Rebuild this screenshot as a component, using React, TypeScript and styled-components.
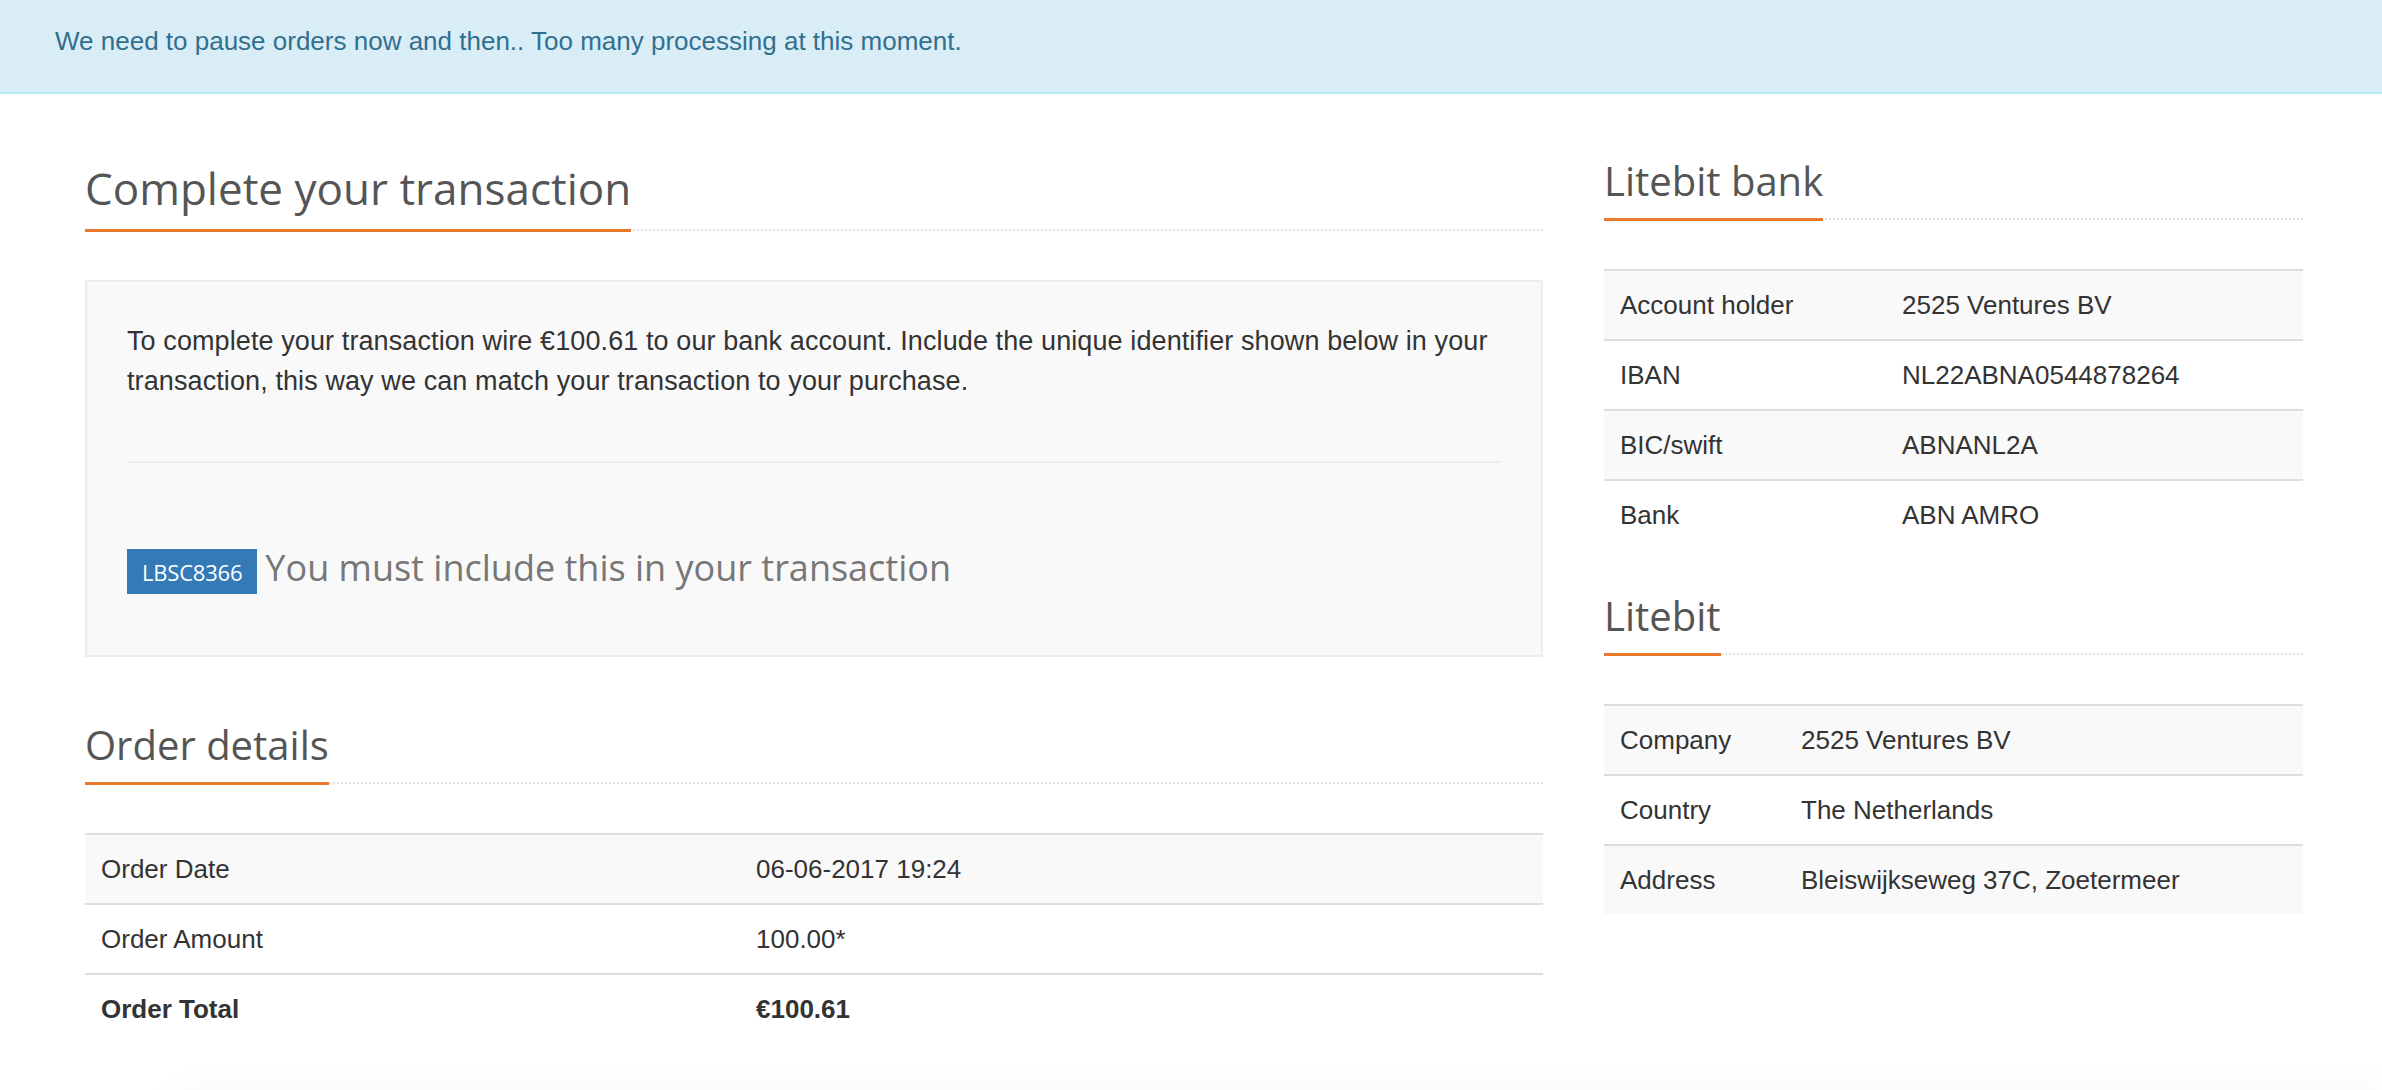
import React from "react";
import styled, { createGlobalStyle } from "styled-components";

const GlobalStyle = createGlobalStyle`
  html, body { margin: 0; padding: 0; background: #fff; }
  body {
    font-family: "Liberation Sans", Arial, Helvetica, sans-serif;
    font-size: 26px;
    line-height: 40px;
    color: #333;
  }
  * { box-sizing: border-box; }
`;

const Alert = styled.div`
  background: #d9edf7;
  color: #31708f;
  border-bottom: 2px solid #bce8f1;
  padding: 21px 55px 31px;
  font-size: 26px;
  line-height: 40px;
`;

const Main = styled.main`
  display: grid;
  grid-template-columns: 1458px 699px;
  column-gap: 61px;
  padding-left: 85px;
  align-items: start;
`;

const Column = styled.section`
  display: flex;
  flex-direction: column;
`;

const SectionTitle = styled.h2<{ $size: number; $top: number }>`
  display: flex;
  margin: ${(p) => p.$top}px 0 49px;
  padding: 0;
  border-bottom: 2px dotted #e2e2e2;
  font-family: "Open Sans", "Noto Sans", sans-serif;
  font-weight: 400;
  font-size: ${(p) => p.$size}px;
  line-height: ${(p) => Math.round(p.$size * 1.1)}px;
  color: #555;
`;

const TitleText = styled.span<{ $pad: number }>`
  display: block;
  padding-bottom: ${(p) => p.$pad}px;
  margin-bottom: -3px;
  border-bottom: 3px solid #e87a2e;
`;

const Panel = styled.div`
  display: flex;
  flex-direction: column;
  background: #f9f9f9;
  border: 2px solid #ececec;
  padding: 39px 40px 41px;
`;

const Lead = styled.p`
  margin: 0 0 20px;
  font-size: 27px;
  letter-spacing: 0.1px;
  line-height: 40px;
  color: #333;
`;

const Divider = styled.hr`
  margin: 40px 0;
  border: 0;
  height: 2px;
  background: #ececec;
`;

const Reference = styled.div`
  margin: 43px 0 20px;
  font-family: "Open Sans", "Noto Sans", sans-serif;
  font-size: 36px;
  line-height: 44px;
  color: #777;
`;

const Badge = styled.span`
  display: inline-block;
  background: #337ab7;
  color: #fff;
  font-family: "Open Sans", "Noto Sans", sans-serif;
  font-size: 22px;
  line-height: 43px;
  padding: 2px 15px 0;
  margin-right: 8px;
  letter-spacing: -0.2px;
`;

const InfoTable = styled.table<{ $labelWidth: number }>`
  width: 100%;
  border-collapse: collapse;
  table-layout: fixed;
  font-size: 26px;
  color: #333;

  td {
    padding: 16px;
    line-height: 36px;
    border-top: 2px solid #dddddd;
    vertical-align: top;
    white-space: nowrap;
  }
  td:first-child {
    width: ${(p) => p.$labelWidth}px;
  }
  tbody tr:nth-child(odd) td {
    background: #f9f9f9;
  }
  tfoot td {
    font-weight: 700;
  }
`;

const PageFooter = styled.footer`
  margin: 50px 0 0 140px;
  height: 200px;
  border-radius: 80px 0 0 0;
  box-shadow: 0 -6px 40px rgba(0, 0, 0, 0.035);
`;

type Row = [string, string];

const bankRows: Row[] = [
  ["Account holder", "2525 Ventures BV"],
  ["IBAN", "NL22ABNA0544878264"],
  ["BIC/swift", "ABNANL2A"],
  ["Bank", "ABN AMRO"],
];

const companyRows: Row[] = [
  ["Company", "2525 Ventures BV"],
  ["Country", "The Netherlands"],
  ["Address", "Bleiswijkseweg 37C, Zoetermeer"],
];

const orderRows: Row[] = [
  ["Order Date", "06-06-2017 19:24"],
  ["Order Amount", "100.00*"],
];

function Rows({ rows }: { rows: Row[] }) {
  return (
    <tbody>
      {rows.map(([k, v]) => (
        <tr key={k}>
          <td>{k}</td>
          <td>{v}</td>
        </tr>
      ))}
    </tbody>
  );
}

export default function App() {
  return (
    <>
      <GlobalStyle />
      <Alert>We need to pause orders now and then.. Too many processing at this moment.</Alert>
      <Main>
        <Column>
          <SectionTitle $size={44} $top={70}>
            <TitleText $pad={17}>Complete your transaction</TitleText>
          </SectionTitle>
          <Panel>
            <Lead>
              To complete your transaction wire €100.61 to our bank account. Include the unique
              identifier shown below in your transaction, this way we can match your transaction to
              your purchase.
            </Lead>
            <Divider />
            <Reference>
              <Badge>LBSC8366</Badge>You must include this in your transaction
            </Reference>
          </Panel>
          <SectionTitle $size={40} $top={66}>
            <TitleText $pad={15}>Order details</TitleText>
          </SectionTitle>
          <InfoTable $labelWidth={655}>
            <Rows rows={orderRows} />
            <tfoot>
              <tr>
                <td>Order Total</td>
                <td>€100.61</td>
              </tr>
            </tfoot>
          </InfoTable>
        </Column>
        <Column>
          <SectionTitle $size={40} $top={65}>
            <TitleText $pad={15}>Litebit bank</TitleText>
          </SectionTitle>
          <InfoTable $labelWidth={282}>
            <Rows rows={bankRows} />
          </InfoTable>
          <SectionTitle $size={40} $top={45}>
            <TitleText $pad={15}>Litebit</TitleText>
          </SectionTitle>
          <InfoTable $labelWidth={181}>
            <Rows rows={companyRows} />
          </InfoTable>
        </Column>
      </Main>
      <PageFooter />
    </>
  );
}
